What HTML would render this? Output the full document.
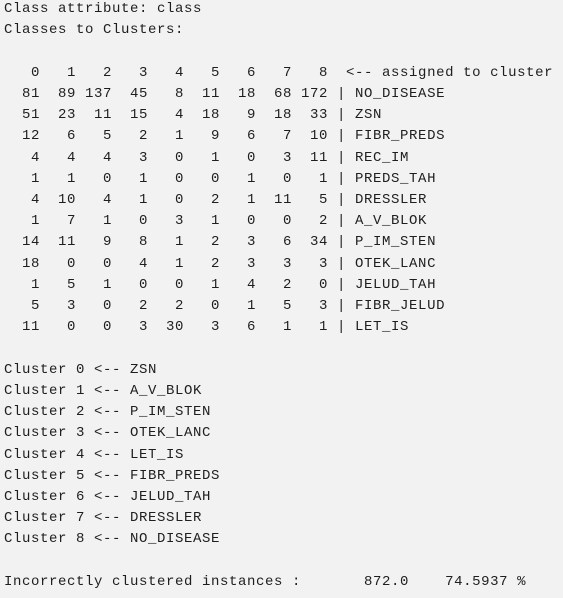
<!DOCTYPE html>
<html><head><meta charset="utf-8"><style>
html,body{margin:0;padding:0;background:#f2f2f2;width:563px;height:598px;overflow:hidden}
pre{margin:0;position:absolute;left:4px;top:-1px;font-family:"Liberation Mono","Courier New",monospace;font-size:14px;letter-spacing:0.6px;line-height:21.22px;color:#1e1e1e}
</style></head><body><pre>Class attribute: class
Classes to Clusters:

   0   1   2   3   4   5   6   7   8  &lt;-- assigned to cluster
  81  89 137  45   8  11  18  68 172 | NO_DISEASE
  51  23  11  15   4  18   9  18  33 | ZSN
  12   6   5   2   1   9   6   7  10 | FIBR_PREDS
   4   4   4   3   0   1   0   3  11 | REC_IM
   1   1   0   1   0   0   1   0   1 | PREDS_TAH
   4  10   4   1   0   2   1  11   5 | DRESSLER
   1   7   1   0   3   1   0   0   2 | A_V_BLOK
  14  11   9   8   1   2   3   6  34 | P_IM_STEN
  18   0   0   4   1   2   3   3   3 | OTEK_LANC
   1   5   1   0   0   1   4   2   0 | JELUD_TAH
   5   3   0   2   2   0   1   5   3 | FIBR_JELUD
  11   0   0   3  30   3   6   1   1 | LET_IS

Cluster 0 &lt;-- ZSN
Cluster 1 &lt;-- A_V_BLOK
Cluster 2 &lt;-- P_IM_STEN
Cluster 3 &lt;-- OTEK_LANC
Cluster 4 &lt;-- LET_IS
Cluster 5 &lt;-- FIBR_PREDS
Cluster 6 &lt;-- JELUD_TAH
Cluster 7 &lt;-- DRESSLER
Cluster 8 &lt;-- NO_DISEASE

Incorrectly clustered instances :       872.0    74.5937 %</pre></body></html>
